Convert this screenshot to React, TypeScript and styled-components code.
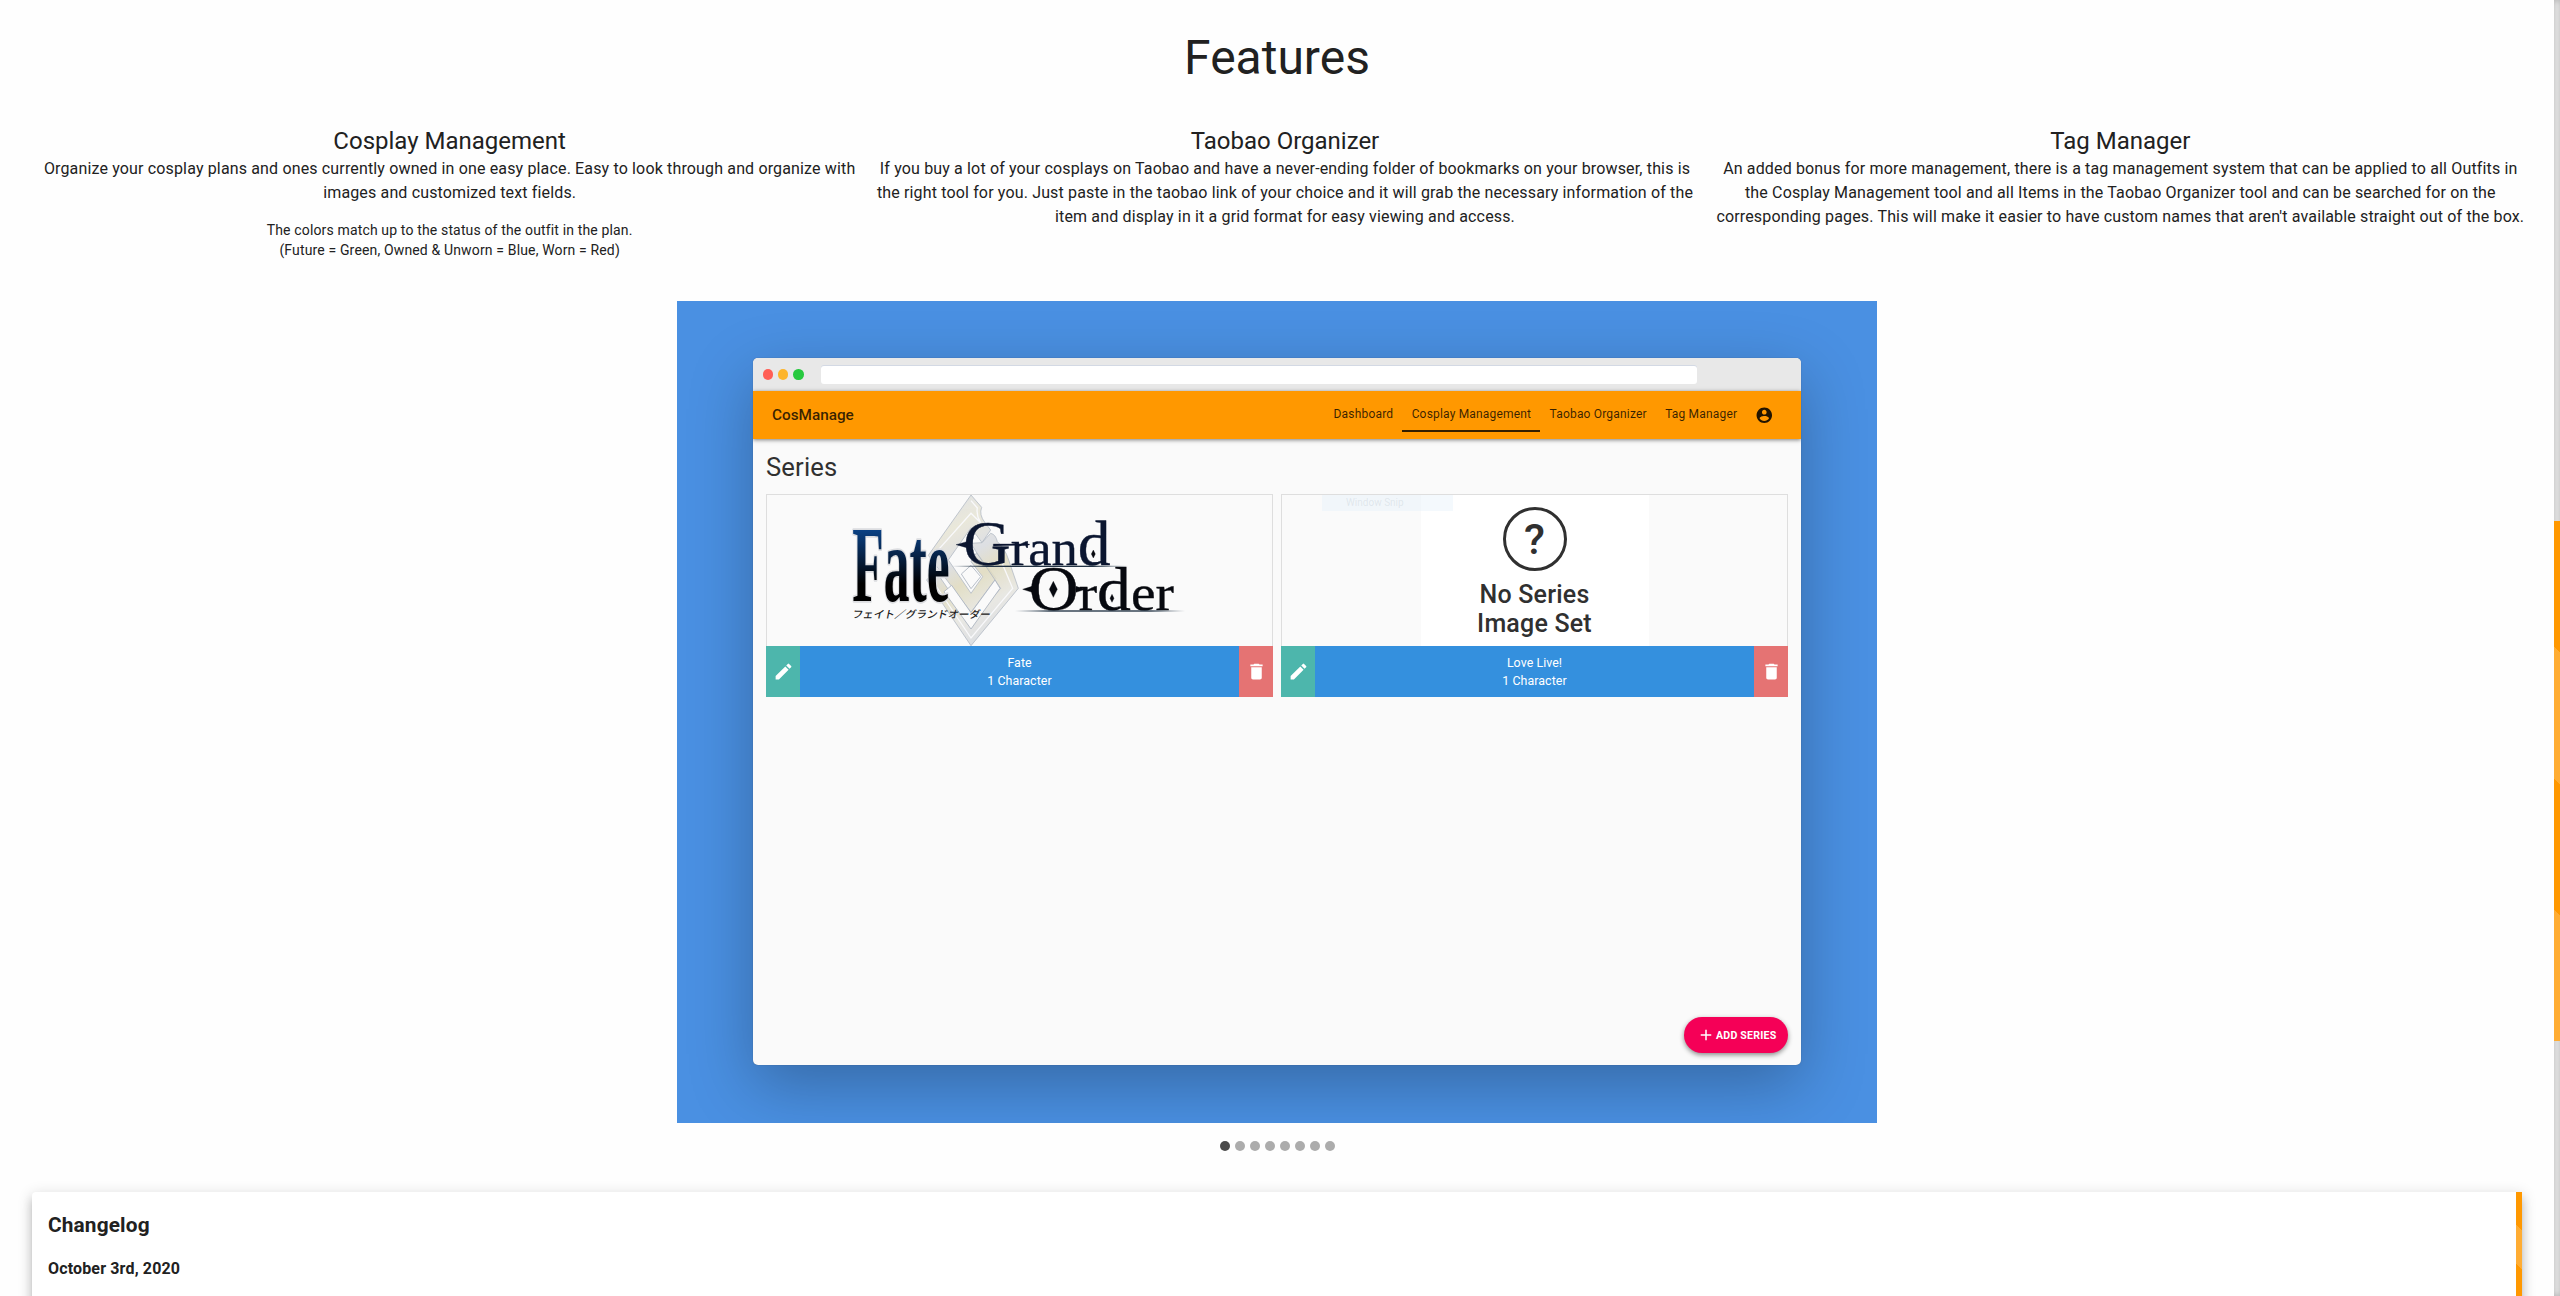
import React from "react";
import styled, { createGlobalStyle } from "styled-components";

const Global = createGlobalStyle`
  * { box-sizing: border-box; }
  body { margin: 0; background: #fefefe; font-family: Roboto, "Liberation Sans", sans-serif; color: #212121; overflow: hidden; }
  h2, h3, h4, p { margin: 0; font-weight: 400; }
`;

const stripes = `linear-gradient(45deg, rgba(255,255,255,.2) 25%, transparent 25%, transparent 50%, rgba(255,255,255,.2) 50%, rgba(255,255,255,.2) 75%, transparent 75%)`;

const Page = styled.div`
  display: flex;
  width: 2560px;
  height: 1296px;
  overflow: hidden;
`;
const Main = styled.main`
  flex: 1;
  display: flex;
  flex-direction: column;
  align-items: center;
  padding: 30px 32px 0;
  & > * { flex: none; }
`;
const Track = styled.div`
  width: 6px;
  padding-top: 521px;
  background: #f5f5f5;
  box-shadow: inset 0 0 6px rgba(0, 0, 0, 0.3);
`;
const Thumb = styled.div<{ $h: number }>`
  width: 6px;
  height: ${(p) => p.$h}px;
  background: ${stripes} #ff9800;
`;
const Title = styled.h2`
  font-size: 48px;
  line-height: 56px;
`;
const Columns = styled.section`
  display: grid;
  grid-template-columns: repeat(3, 1fr);
  width: 2506px;
  height: 176px;
  margin: 39px -16px 0 0;
  align-self: flex-start;
`;
const Column = styled.article`
  padding: 0 8px;
  text-align: center;
`;
const ColumnTitle = styled.h3`
  font-size: 24px;
  line-height: 32px;
`;
const Body = styled.p`
  font-size: 16px;
  line-height: 24px;
  letter-spacing: 0.00938em;
`;
const Note = styled.p`
  margin-top: 15px;
  font-size: 14px;
  line-height: 20px;
  letter-spacing: 0.01071em;
`;
const Slide = styled.div`
  width: 1200px;
  height: 822px;
  padding: 57px 76px 58px;
  background: #4a90e2;
  overflow: hidden;
`;
const Window = styled.div`
  display: flex;
  flex-direction: column;
  height: 707px;
  border-radius: 5px;
  overflow: hidden;
  background: #fafafa;
  box-shadow: 0 0 1px rgba(60, 70, 80, 0.7), 0 20px 64px rgba(0, 0, 0, 0.27);
`;
const Chrome = styled.div`
  display: flex;
  align-items: center;
  height: 33px;
  padding-left: 9.5px;
  gap: 5px;
  background: #e8e8e8;
`;
const Light = styled.i<{ $c: string }>`
  width: 10.4px;
  height: 10.4px;
  border-radius: 50%;
  background: ${(p) => p.$c};
`;
const Address = styled.div`
  width: 876px;
  height: 18px;
  margin-left: 12px;
  border-radius: 3px;
  background: #fff;
  box-shadow: 0 -1px 0 #d3d9e4;
`;
const AppBar = styled.header`
  display: flex;
  align-items: center;
  height: 48px;
  padding: 0 27px 0 19px;
  background: #ff9800;
  color: rgba(0, 0, 0, 0.78);
  box-shadow: 0 1px 4px rgba(0, 0, 0, 0.5);
`;
const Brand = styled.div`
  flex: 1;
  font-size: 15.3px;
  font-weight: 500;
`;
const Tab = styled.div<{ $w: number; $active?: boolean }>`
  width: ${(p) => p.$w}px;
  height: 34px;
  line-height: 32px;
  text-align: center;
  font-size: 12px;
  white-space: nowrap;
  letter-spacing: 0.18px;
  border-bottom: 2px solid ${(p) => (p.$active ? "rgba(0,0,0,.8)" : "transparent")};
`;
const Account = styled.svg`
  width: 18.6px;
  height: 18.6px;
  margin-left: 9px;
  fill: rgba(0, 0, 0, 0.87);
`;
const Content = styled.div`
  flex: 1;
  display: flex;
  flex-direction: column;
  padding: 12px 13px 12px;
`;
const SeriesTitle = styled.h3`
  height: 43px;
  font-size: 25.6px;
  line-height: 32px;
  letter-spacing: 0.15px;
  color: #303030;
`;
const Cards = styled.div`
  display: grid;
  grid-template-columns: 507px 507px;
  gap: 8px;
`;
const Picture = styled.div`
  position: relative;
  display: flex;
  justify-content: center;
  height: 152px;
  border: 1px solid #dedede;
  border-bottom: 0;
`;
const Logo = styled.svg`
  width: 507px;
  height: 152px;
  margin: -1px;
  flex: none;
`;
const Placeholder = styled.div`
  display: flex;
  flex-direction: column;
  align-items: center;
  width: 228px;
  padding-top: 12px;
  background: #fff;
  color: #303030;
  font-size: 25px;
  line-height: 29px;
  letter-spacing: 0.2px;
  font-weight: 500;
  text-align: center;
`;
const Question = styled.div`
  width: 64px;
  height: 64px;
  margin-bottom: 9px;
  border: 3px solid #303030;
  border-radius: 50%;
  font-size: 43px;
  line-height: 58px;
`;
const Ghost = styled.div`
  position: absolute;
  left: 40px;
  top: 0;
  width: 131px;
  height: 16px;
  padding-left: 24px;
  background: rgba(228, 241, 250, 0.4);
  color: rgba(150, 165, 175, 0.2);
  font-size: 10px;
  line-height: 15px;
`;
const Footer = styled.div`
  display: flex;
  height: 51px;
  color: #fff;
`;
const Action = styled.div<{ $c: string }>`
  display: flex;
  align-items: center;
  justify-content: center;
  width: 34px;
  background: ${(p) => p.$c};
  svg { width: 21px; height: 21px; fill: #fff; }
`;
const Caption = styled.div`
  flex: 1;
  padding-top: 8px;
  background: #3490de;
  text-align: center;
  font-size: 12.4px;
  letter-spacing: 0.06px;
  line-height: 18.3px;
`;
const AddButton = styled.div`
  display: flex;
  align-items: center;
  align-self: flex-end;
  width: 104px;
  height: 36px;
  margin-top: auto;
  padding-left: 13px;
  gap: 1px;
  border-radius: 18px;
  background: #f50057;
  color: #fff;
  font-size: 10.6px;
  font-weight: 700;
  letter-spacing: 0.2px;
  white-space: nowrap;
  box-shadow: 0 2px 5px rgba(0, 0, 0, 0.45);
  svg { width: 18px; height: 18px; fill: #fff; flex: none; }
`;
const Dots = styled.div`
  display: flex;
  gap: 5px;
  margin-top: 18px;
`;
const Dot = styled.i<{ $on: boolean }>`
  width: 10px;
  height: 10px;
  border-radius: 50%;
  background: ${(p) => (p.$on ? "#4a4a4a" : "#acacac")};
`;
const Changelog = styled.section`
  display: flex;
  justify-content: space-between;
  align-self: flex-start;
  width: 2490px;
  height: 300px;
  margin-top: 41px;
  border-radius: 4px 0 0 4px;
  background: #fff;
  box-shadow: 0 5px 5px -3px rgba(0,0,0,.2), 0 8px 10px 1px rgba(0,0,0,.14), 0 3px 14px 2px rgba(0,0,0,.12);
`;
const Entries = styled.div`
  padding: 17px 16px;
`;
const LogTitle = styled.h3`
  font-size: 20.8px;
  line-height: 32px;
  font-weight: 700;
  letter-spacing: 0.0075em;
`;
const LogDate = styled.h4`
  margin-top: 16px;
  font-size: 16px;
  line-height: 24px;
  font-weight: 700;
  letter-spacing: 0.00938em;
`;

function FateLogo() {
  return (
    <Logo viewBox="-162 42 1521 456">
      <defs>
        <linearGradient id="ink" x1="0" y1="150" x2="0" y2="365" gradientUnits="userSpaceOnUse">
          <stop offset="0" stopColor="#0a4184" />
          <stop offset=".35" stopColor="#062348" />
          <stop offset=".75" stopColor="#000" />
        </linearGradient>
        <linearGradient id="metal" x1="330" y1="80" x2="560" y2="470" gradientUnits="userSpaceOnUse">
          <stop offset="0" stopColor="#d9dde3" />
          <stop offset=".2" stopColor="#e8e5d5" />
          <stop offset=".4" stopColor="#d9dbe0" />
          <stop offset=".55" stopColor="#dfdabd" />
          <stop offset=".75" stopColor="#e6e5df" />
          <stop offset="1" stopColor="#d3d7de" />
        </linearGradient>
        <linearGradient id="rule">
          <stop offset="0" stopColor="#456" stopOpacity="0" />
          <stop offset=".2" stopColor="#234" />
          <stop offset=".8" stopColor="#234" />
          <stop offset="1" stopColor="#456" stopOpacity="0" />
        </linearGradient>
      </defs>
      <g fill="url(#metal)" stroke="#aab2be" strokeWidth="2.5">
        <path d="M453 45 L485 82 Q476 104 495 128 L512 150 L486 188 L453 143 L385 240 L453 340 L488 290 L453 245 L470 218 L528 295 L453 397 L325 226 Z" opacity=".85" />
        <path d="M512 160 Q527 163 532 185 Q555 205 566 240 L595 325 L453 497 L320 300 L345 270 L453 428 L542 325 L470 218 L453 190 L486 188 Z" opacity=".85" />
        <path d="M453 62 L472 84 Q468 106 482 128 L453 100 L340 226" fill="none" stroke="#f9f9fb" strokeWidth="4" />
        <path d="M336 300 L453 474 L578 325 L540 235" fill="none" stroke="#f9f9fb" strokeWidth="4" />
        <path d="M453 256 L482 290 L453 326 L424 282 Z" fill="#fafafa" />
        <path d="M395 316 L453 398 L525 300 L540 325 L453 447 L372 335 Z" fill="#fafafa" />
      </g>
      <g fontFamily="'Liberation Serif', serif">
        <text x="97" y="362" fontSize="322" fontWeight="700" textLength="292" lengthAdjust="spacingAndGlyphs" fill="url(#ink)" stroke="#dcdde0" strokeWidth="10" strokeLinejoin="round" paintOrder="stroke">Fate</text>
        <g fill="#0b1630" stroke="#0b1630" strokeWidth="1">
          <text x="430" y="256" fontSize="152" textLength="442" lengthAdjust="spacingAndGlyphs"><tspan fontSize="190">G</tspan>ran<tspan fontSize="190">d</tspan></text>
          <path d="M408 194 L440 185 V203 Z M520 192 L628 192 V195 L520 198 Z" />
        </g>
        <g fill="#07090f" stroke="#07090f" strokeWidth="1">
          <text x="626" y="390" fontSize="152" textLength="436" lengthAdjust="spacingAndGlyphs"><tspan fontSize="190">O</tspan>r<tspan fontSize="186">d</tspan>er</text>
          <path d="M608 328 L636 319 V337 Z M796 328 L768 319 V337 Z M700 304 L712 328 L700 352 L688 328 Z M820 210 L826 222 L820 234 L814 222 Z M876 343 L882 355 L876 367 L870 355 Z" />
        </g>
      </g>
      <rect x="395" y="257" width="530" height="4" fill="url(#rule)" />
      <rect x="585" y="391" width="510" height="4" fill="url(#rule)" />
      <text x="0" y="0" transform="translate(95 415) skewX(-12)" fontFamily="'Noto Sans CJK JP', sans-serif" fontWeight="500" fontSize="31" fill="#222" textLength="415" lengthAdjust="spacingAndGlyphs">フェイト／グランドオーダー</text>
    </Logo>
  );
}

function SeriesCard({ name, children }: { name: string; children: React.ReactNode }) {
  return (
    <div>
      <Picture>{children}</Picture>
      <Footer>
        <Action $c="#4db6ac">
          <svg viewBox="0 0 24 24"><path d="M3 17.25V21h3.75L17.81 9.94l-3.75-3.75L3 17.25zM20.71 7.04a1 1 0 0 0 0-1.41l-2.34-2.34a1 1 0 0 0-1.41 0l-1.83 1.83 3.75 3.75 1.83-1.83z" /></svg>
        </Action>
        <Caption>{name}<br />1 Character</Caption>
        <Action $c="#e57373">
          <svg viewBox="0 0 24 24"><path d="M6 19c0 1.1.9 2 2 2h8c1.1 0 2-.9 2-2V7H6v12zM19 4h-3.5l-1-1h-5l-1 1H5v2h14V4z" /></svg>
        </Action>
      </Footer>
    </div>
  );
}

export default function App() {
  return (
    <Page>
      <Global />
      <Main>
        <Title>Features</Title>
        <Columns>
          <Column>
            <ColumnTitle>Cosplay Management</ColumnTitle>
            <Body>Organize your cosplay plans and ones currently owned in one easy place. Easy to look through and organize with images and customized text fields.</Body>
            <Note>The colors match up to the status of the outfit in the plan.<br />(Future = Green, Owned &amp; Unworn = Blue, Worn = Red)</Note>
          </Column>
          <Column>
            <ColumnTitle>Taobao Organizer</ColumnTitle>
            <Body>If you buy a lot of your cosplays on Taobao and have a never-ending folder of bookmarks on your browser, this is the right tool for you. Just paste in the taobao link of your choice and it will grab the necessary information of the item and display in it a grid format for easy viewing and access.</Body>
          </Column>
          <Column>
            <ColumnTitle>Tag Manager</ColumnTitle>
            <Body>An added bonus for more management, there is a tag management system that can be applied to all Outfits in the Cosplay Management tool and all Items in the Taobao Organizer tool and can be searched for on the corresponding pages. This will make it easier to have custom names that aren't available straight out of the box.</Body>
          </Column>
        </Columns>
        <Slide>
          <Window>
            <Chrome>
              <Light $c="#ff5f56" />
              <Light $c="#fdb52c" />
              <Light $c="#27c93f" />
              <Address />
            </Chrome>
            <AppBar>
              <Brand>CosManage</Brand>
              <Tab $w={78}>Dashboard</Tab>
              <Tab $w={138} $active>Cosplay Management</Tab>
              <Tab $w={115.5}>Taobao Organizer</Tab>
              <Tab $w={90.5}>Tag Manager</Tab>
              <Account viewBox="0 0 24 24"><path d="M12 2C6.48 2 2 6.48 2 12s4.48 10 10 10 10-4.48 10-10S17.52 2 12 2zm0 3c1.66 0 3 1.34 3 3s-1.34 3-3 3-3-1.34-3-3 1.34-3 3-3zm0 14.2c-2.5 0-4.71-1.28-6-3.22.03-1.99 4-3.08 6-3.08 1.99 0 5.97 1.09 6 3.08-1.29 1.94-3.5 3.22-6 3.22z" /></Account>
            </AppBar>
            <Content>
              <SeriesTitle>Series</SeriesTitle>
              <Cards>
                <SeriesCard name="Fate"><FateLogo /></SeriesCard>
                <SeriesCard name="Love Live!">
                  <Placeholder>
                    <Question>?</Question>
                    No Series<br />Image Set
                  </Placeholder>
                  <Ghost>Window Snip</Ghost>
                </SeriesCard>
              </Cards>
              <AddButton>
                <svg viewBox="0 0 24 24"><path d="M19 13h-6v6h-2v-6H5v-2h6V5h2v6h6v2z" /></svg>
                ADD SERIES
              </AddButton>
            </Content>
          </Window>
        </Slide>
        <Dots>{Array.from({ length: 8 }, (_, i) => <Dot key={i} $on={i === 0} />)}</Dots>
        <Changelog>
          <Entries>
            <LogTitle>Changelog</LogTitle>
            <LogDate>October 3rd, 2020</LogDate>
          </Entries>
          <Thumb $h={150} />
        </Changelog>
      </Main>
      <Track><Thumb $h={520} /></Track>
    </Page>
  );
}
